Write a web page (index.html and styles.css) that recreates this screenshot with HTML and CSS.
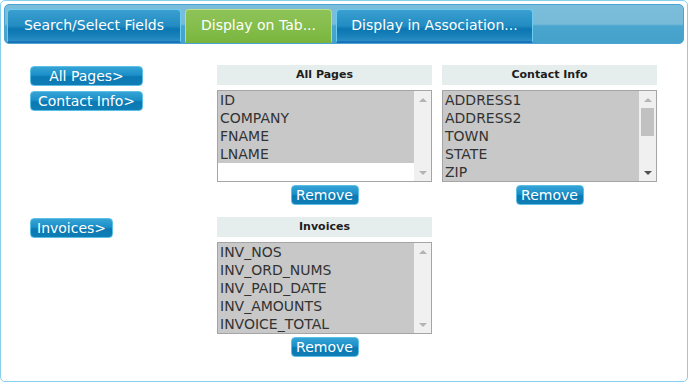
FILE: index.html
```html
<!DOCTYPE html>
<html>

<head>
    <title>Field Display</title>
    <link rel="stylesheet" href="styles.css">
</head>

<body>
    <div class="frame">
        <div class="tabbar">
            <div class="tab tab-search">Search/Select Fields</div>
            <div class="tab tab-active tab-display">Display on Tab...</div>
            <div class="tab tab-assoc">Display in Association...</div>
        </div>

        <div class="content">
            <div class="row">
                <div class="links">
                    <button class="btn link-wide">All Pages&gt;</button>
                    <button class="btn link-wide">Contact Info&gt;</button>
                </div>
                <div class="group">
                    <div class="heading">All Pages</div>
                    <div class="listbox">
                        <div class="items">
                            <div class="item sel">ID</div>
                            <div class="item sel">COMPANY</div>
                            <div class="item sel">FNAME</div>
                            <div class="item sel">LNAME</div>
                        </div>
                        <div class="scroll">
                            <span class="arrow up"></span>
                            <span class="arrow down"></span>
                        </div>
                    </div>
                    <button class="btn remove">Remove</button>
                </div>
                <div class="group">
                    <div class="heading">Contact Info</div>
                    <div class="listbox">
                        <div class="items">
                            <div class="item sel">ADDRESS1</div>
                            <div class="item sel">ADDRESS2</div>
                            <div class="item sel">TOWN</div>
                            <div class="item sel">STATE</div>
                            <div class="item sel">ZIP</div>
                        </div>
                        <div class="scroll">
                            <span class="arrow up"></span>
                            <span class="thumb"></span>
                            <span class="arrow down dark"></span>
                        </div>
                    </div>
                    <button class="btn remove">Remove</button>
                </div>
            </div>

            <div class="row">
                <div class="links">
                    <button class="btn">Invoices&gt;</button>
                </div>
                <div class="group">
                    <div class="heading">Invoices</div>
                    <div class="listbox">
                        <div class="items">
                            <div class="item sel">INV_NOS</div>
                            <div class="item sel">INV_ORD_NUMS</div>
                            <div class="item sel">INV_PAID_DATE</div>
                            <div class="item sel">INV_AMOUNTS</div>
                            <div class="item sel">INVOICE_TOTAL</div>
                        </div>
                        <div class="scroll">
                            <span class="arrow up"></span>
                            <span class="arrow down"></span>
                        </div>
                    </div>
                    <button class="btn remove">Remove</button>
                </div>
            </div>
        </div>
    </div>
</body>

</html>
```

FILE: styles.css
```css
body {
    margin: 0;
    padding: 0;
    font-family: "DejaVu Sans", Verdana, sans-serif;
    background-color: #ffffff;
}

.frame {
    width: 688px;
    height: 382px;
    box-sizing: border-box;
    border: 1px solid #86d0ee;
    border-radius: 5px;
    padding: 3px;
}

/* tab strip */
.tabbar {
    display: flex;
    align-items: flex-end;
    gap: 4px;
    height: 40px;
    box-sizing: border-box;
    padding: 0 2px;
    border: 1px solid #4aa3d3;
    border-radius: 5px;
    background: linear-gradient(to bottom, #7bbedb 0%, #77bbd9 50%, #4ba6ce 55%, #43a1cb 100%);
}

.tab {
    height: 34px;
    box-sizing: border-box;
    line-height: 31px;
    text-align: center;
    color: #ffffff;
    font-size: 14px;
    border: 1px solid #6ccbf0;
    border-bottom: 2px solid #1a73b8;
    border-radius: 4px 4px 0 0;
    background: linear-gradient(to bottom, #3a9fd0 0%, #238cc2 50%, #0b76b1 62%, #1a82bb 85%, #2b8fc4 100%);
}

.tab-search {
    width: 174px;
}

.tab-display {
    width: 147px;
}

.tab-assoc {
    width: 197px;
}

.tab-active {
    border-color: #bddd86;
    border-bottom: 2px solid #7ab33d;
    background: linear-gradient(to bottom, #8ec357 0%, #86be4d 50%, #7ab63f 100%);
}

/* page body */
.content {
    padding: 21px 0 0 26px;
}

.row {
    display: flex;
    margin-bottom: 12px;
}

.links {
    width: 113px;
    margin-right: 74px;
    padding-top: 1px;
    display: flex;
    flex-direction: column;
    align-items: flex-start;
    gap: 5px;
}

.group {
    width: 215px;
    margin-right: 10px;
    display: flex;
    flex-direction: column;
    align-items: center;
}

.btn {
    font-family: inherit;
    font-size: 14px;
    color: #ffffff;
    height: 20px;
    padding: 0 6px;
    line-height: 16px;
    border: 1px solid #5bbfe6;
    border-radius: 4px;
    background: linear-gradient(to bottom, #35a3d5 0%, #1c8fc8 45%, #0a79b3 55%, #107db5 100%);
    cursor: pointer;
}

.link-wide {
    width: 113px;
}

.remove {
    width: 68px;
    margin-top: 3px;
    padding: 0;
}

.heading {
    width: 100%;
    height: 20px;
    line-height: 20px;
    text-align: center;
    font-size: 11px;
    font-weight: bold;
    color: #1d1d1d;
    background-color: #e6eded;
    margin-bottom: 5px;
}

.listbox {
    width: 215px;
    height: 92px;
    box-sizing: border-box;
    border: 1px solid #a5a5a5;
    display: flex;
    background-color: #ffffff;
}

.items {
    flex: 1;
    overflow: hidden;
}

.item {
    height: 18px;
    line-height: 18px;
    padding-left: 2px;
    font-size: 14px;
    color: #333333;
    white-space: nowrap;
}

.sel {
    background-color: #c8c8c8;
}

.scroll {
    width: 17px;
    position: relative;
    background-color: #f0f0f0;
}

.arrow {
    position: absolute;
    left: 5px;
    width: 0;
    height: 0;
    border-left: 4px solid transparent;
    border-right: 4px solid transparent;
}

.arrow.up {
    top: 7px;
    border-bottom: 4px solid #b4b4b4;
}

.arrow.down {
    bottom: 6px;
    border-top: 4px solid #b4b4b4;
}

.arrow.dark {
    border-top-color: #505050;
}

.thumb {
    position: absolute;
    top: 17px;
    left: 2px;
    width: 13px;
    height: 28px;
    background-color: #c1c1c1;
}
```
